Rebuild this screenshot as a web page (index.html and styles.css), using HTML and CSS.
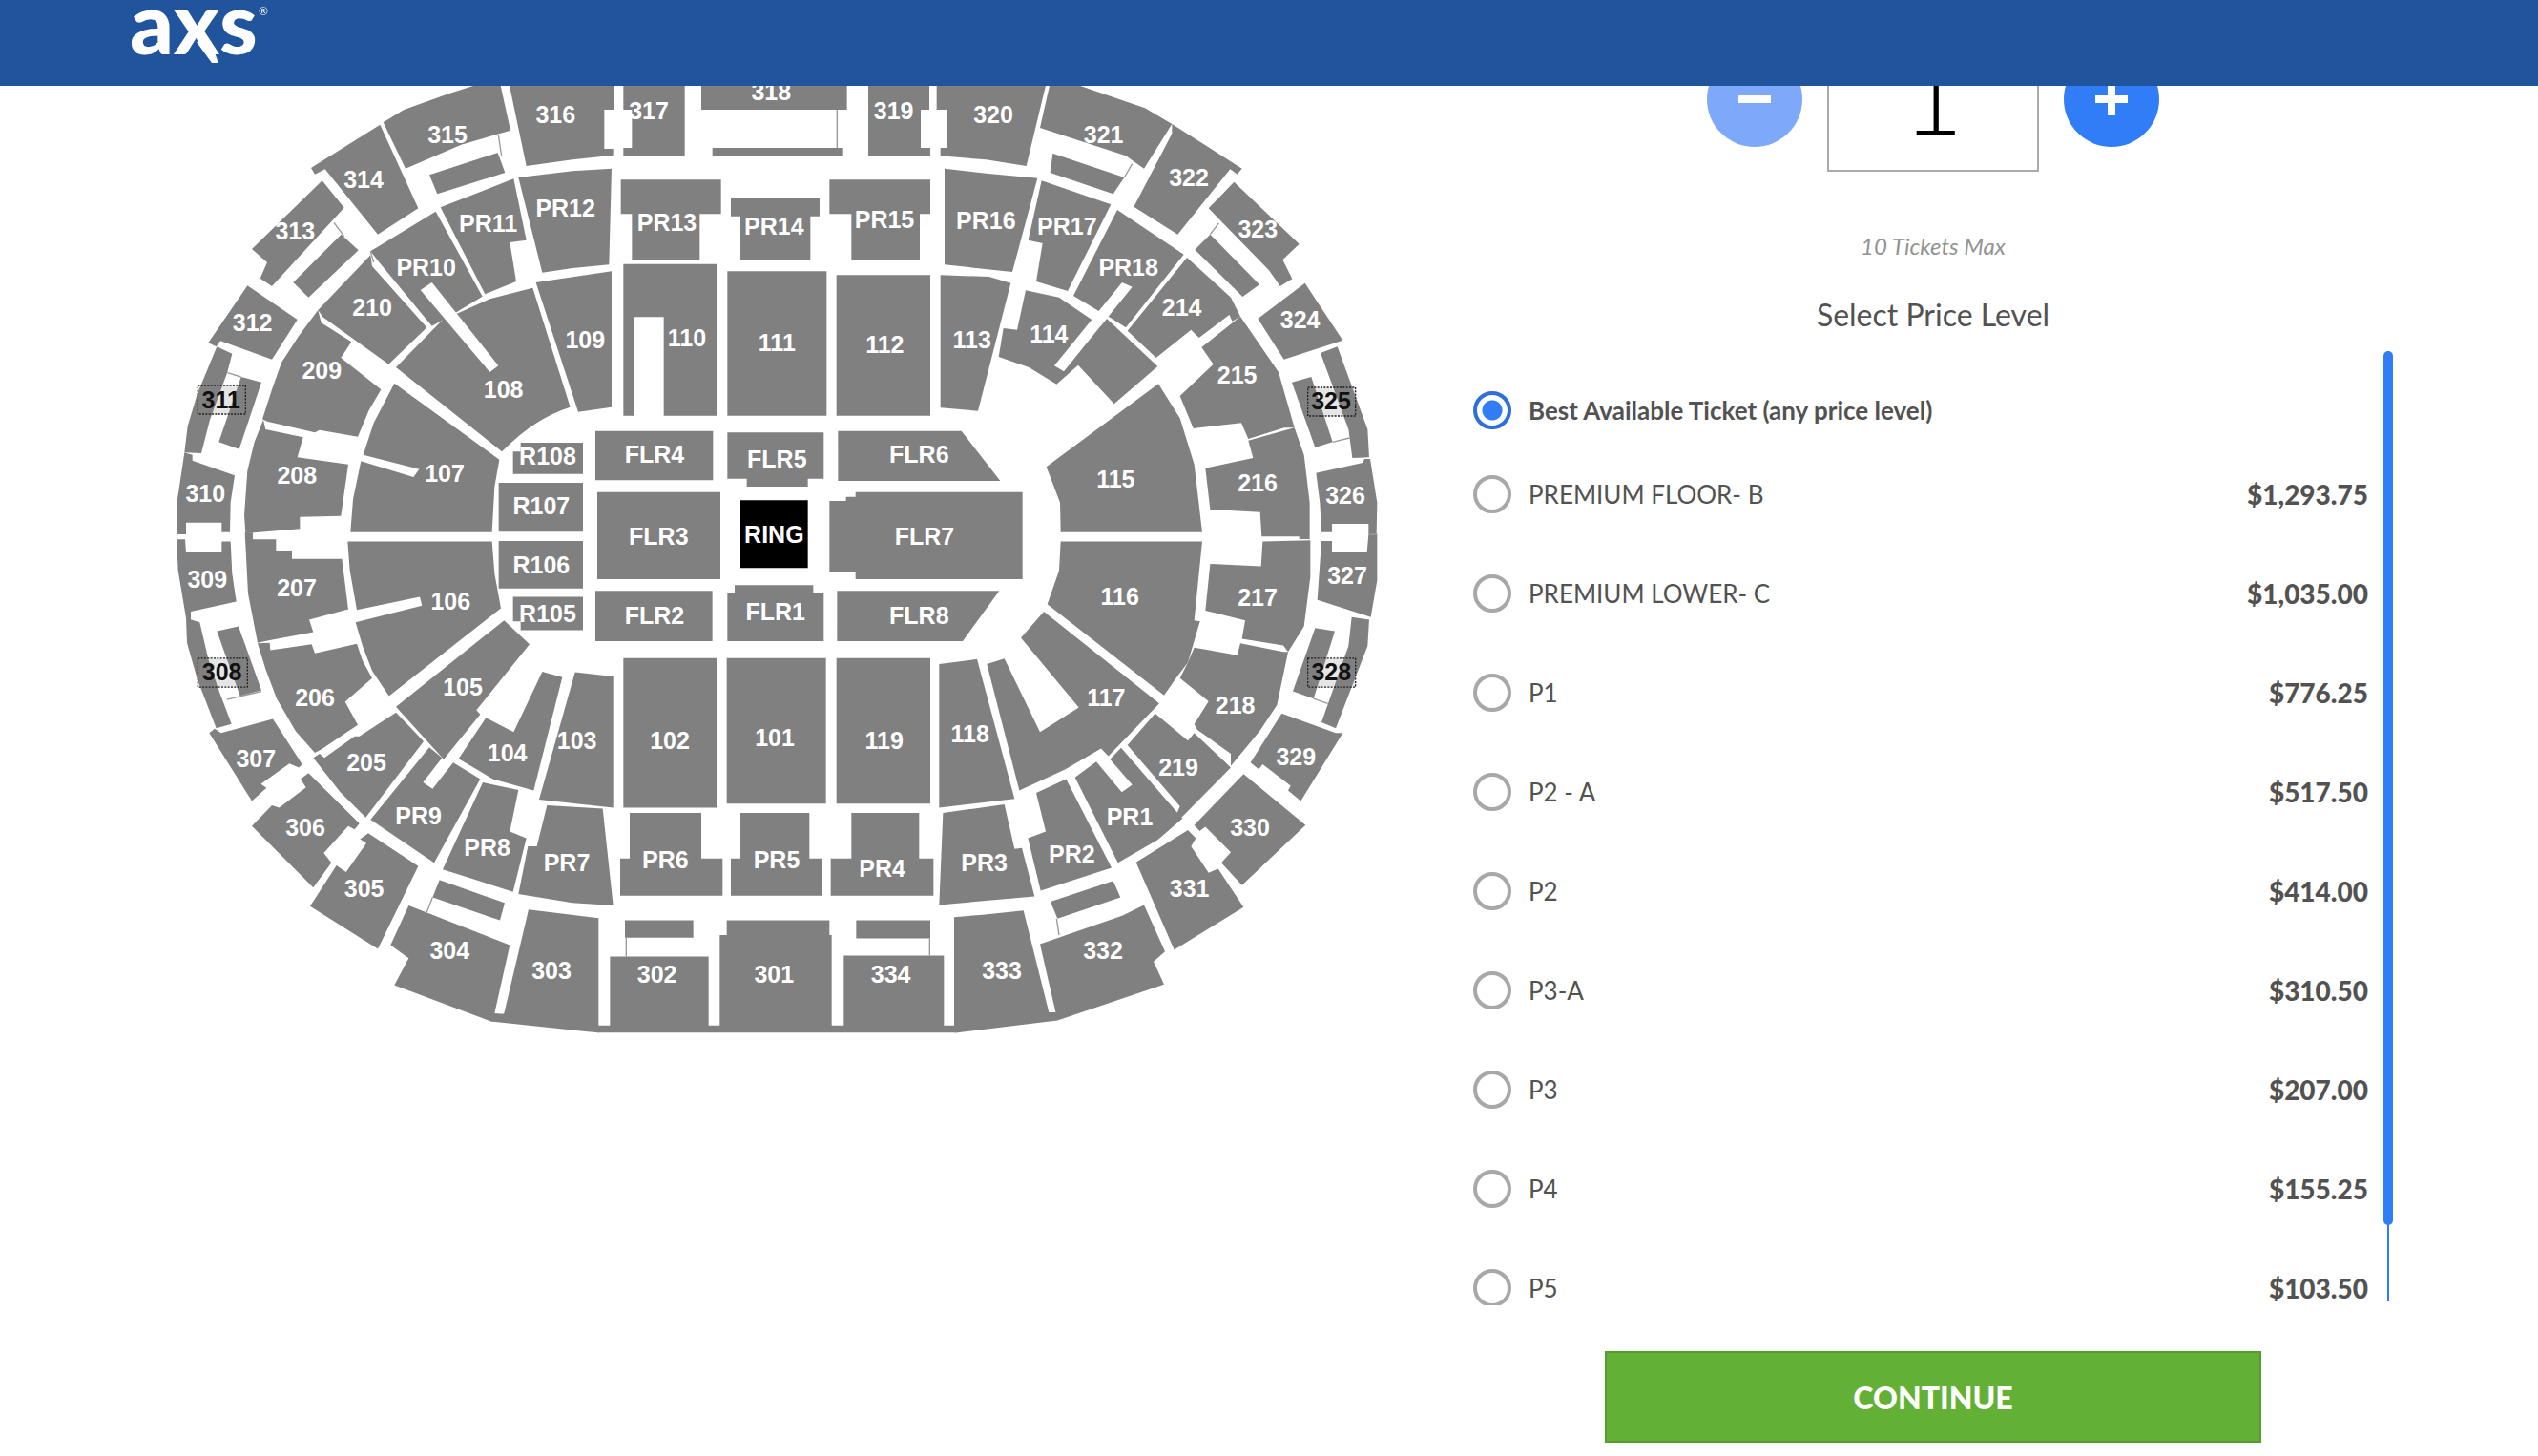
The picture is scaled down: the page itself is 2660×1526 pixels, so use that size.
FILE: index.html
```
<!DOCTYPE html>
<html lang="en">
  <head>
    <meta charset="UTF-8">
    <meta name="viewport" content="width=device-width, initial-scale=1.0">
    <title>AXS - Select Tickets</title>
    <link rel="stylesheet" href="styles.css">
  </head>
  <body>
    <header class="header">
      <a class="logo" href="#" aria-label="AXS home">
        <svg width="150" height="80" viewBox="0 0 150 80">
          <text class="logo-letters" x="0" y="57">axs</text>
          <path d="M70 44L84 42 93 66 86 66Z"/>
          <text class="logo-mark" x="135" y="16">®</text>
        </svg>
      </a>
    </header>

    <main class="content">
      <svg class="seat-map" viewBox="0 0 3870 3060" role="img" aria-label="Venue seating map">
        <!-- upper left -->
        <g>
          <path d="M1090 20L1420 20 1420 105 1390 105 1390 228 1418 228 1418 248 1290 262 1145 282Z"/>
          <path d="M695 145L760 105 900 55 985 28 1062 20 1095 170 940 215 765 290Z"/>
          <path d="M840 310L1055 240 1078 303 865 370Z"/>
          <path d="M685 152L805 415 678 497 512 292 480 308 468 288Z"/>
          <path d="M503 328L572 413 345 660 308 635 330 585 282 543Z"/>
          <path d="M563 497L617 547 460 695 412 648Z"/>
          <path d="M268 658L425 765 345 890 183 832 170 850 145 838Z"/>
          <path d="M172 850L220 872 205 930 150 1080 123 1185 70 1183 80 1100 110 1000Z"/>
          <path d="M248 945L312 962 242 1172 178 1150Z"/>
          <path d="M70 1183L95 1190 95 1208 228 1255 215 1340 213 1433 187 1433 187 1403 75 1403 75 1440 45 1440 48 1330Z"/>
          <path d="M875 412L1105 322 1145 515 1093 522 1113 645 1015 685Z"/>
          <path d="M1120 318L1290 298 1413 290 1405 592 1290 603 1195 617Z"/>
          <path d="M655 550L860 425 1007 692 920 745 848 785 680 582Z"/>
          <path d="M735 915L885 762 930 745 1030 700 1165 665 1283 1040Q1170 1075 1068 1180Z"/>
          <path class="aisle" d="M848 648L1057 910 1030 930 812 672Z"/>
          <path d="M490 735L655 562 660 597 832 790 712 905 505 757Z"/>
          <path d="M490 735L500 775 595 835 562 885 688 985 650 1050 615 1133 495 1112 480 1120 330 1085 315 1078 345 985 375 900 430 815Z"/>
          <path d="M318 1080L325 1110 443 1135 425 1198 585 1220 562 1382 433 1385 433 1423 262 1437 258 1380 268 1240 290 1150Z"/>
          <path d="M730 965L1060 1205 1045 1290 1037 1433 592 1433 600 1330 625 1210 790 1260 808 1235 632 1190 665 1090Z"/>
          <path d="M1175 648L1413 613 1413 1040 1308 1055Z"/>
          <path d="M1103 1180L1127 1180 1127 1152 1323 1152 1323 1250 1103 1250Z"/>
          <path d="M1058 1278H1323V1432H1058Z"/>
          <path class="edge" d="M1057 185L1067 250M540 460L572 503M205 932L248 945M655 550L665 585"/>
          <text x="1237" y="148">316</text>
          <text x="897" y="210">315</text>
          <text x="633" y="350">314</text>
          <text x="418" y="512">313</text>
          <text x="284" y="800">312</text>
          <text x="136" y="1338">310</text>
          <text x="1268" y="442">PR12</text>
          <text x="1025" y="490">PR11</text>
          <text x="830" y="627">PR10</text>
          <text x="660" y="754">210</text>
          <text x="502" y="952">209</text>
          <text x="424" y="1280">208</text>
          <text x="1330" y="856">109</text>
          <text x="1073" y="1010">108</text>
          <text x="888" y="1274">107</text>
          <text x="1212" y="1222">R108</text>
          <text x="1192" y="1378">R107</text>
          <rect class="marked" x="112" y="972" width="150" height="90"/>
          <text class="marked-label" x="185" y="1044">311</text>
        </g>

        <!-- upper centre -->
        <g transform="translate(1290 0)">
          <path d="M160 20L353 20 353 250 160 250 160 225 187 225 187 105 160 105Z"/>
          <path d="M405 20H863V105H405Z"/>
          <path d="M440 225H848V250H440Z"/>
          <path d="M930 20L1122 20 1122 105 1095 105 1095 225 1125 225 1125 250 930 250Z"/>
          <path d="M1145 20L1490 20 1427 282 1300 262 1157 250 1157 225 1178 225 1178 105 1145 105Z"/>
          <path d="M152 325L467 325 467 433 400 433 400 577 187 577 187 433 152 433Z"/>
          <path d="M498 382L777 382 777 440 748 440 748 577 528 577 528 440 498 440Z"/>
          <path d="M808 325L1125 325 1125 433 1092 433 1092 577 877 577 877 433 808 433Z"/>
          <path d="M1170 290L1300 305 1462 320 1383 615 1170 592Z"/>
          <path d="M160 590L453 590 453 1067 287 1067 287 757 193 757 193 1067 160 1067Z"/>
          <path d="M487 613H799V1067H487Z"/>
          <path d="M830 625H1125V1067H830Z"/>
          <path d="M1157 625L1310 630 1378 650 1275 1052 1157 1042Z"/>
          <path d="M72 1115H442V1270H72Z"/>
          <path d="M487 1120L790 1120 790 1265 740 1265 740 1290 548 1290 548 1265 487 1265Z"/>
          <path d="M835 1115L1223 1115 1345 1272 835 1272Z"/>
          <path d="M78 1307H465V1581H78Z"/>
          <path d="M808 1335L860 1335 860 1322 890 1322 890 1307 1415 1307 1415 1581 890 1581 890 1557 808 1557Z"/>
          <path class="ring" d="M528 1333H740V1546H528Z"/>
          <path class="edge" d="M832 105V225"/>
          <text x="240" y="134">317</text>
          <text x="625" y="74">318</text>
          <text x="1010" y="134">319</text>
          <text x="1323" y="148">320</text>
          <text x="297" y="486">PR13</text>
          <text x="634" y="498">PR14</text>
          <text x="981" y="478">PR15</text>
          <text x="1300" y="480">PR16</text>
          <text x="360" y="850">110</text>
          <text x="643" y="864">111</text>
          <text x="982" y="870">112</text>
          <text x="1256" y="856">113</text>
          <text x="258" y="1216">FLR4</text>
          <text x="643" y="1230">FLR5</text>
          <text x="1090" y="1216">FLR6</text>
          <text x="271" y="1472">FLR3</text>
          <text x="1107" y="1472">FLR7</text>
          <text x="634" y="1466">RING</text>
        </g>

        <!-- upper right -->
        <g transform="translate(2490 0)">
          <path d="M302 20L390 28 600 100 685 150 597 290 540 250 270 162Z"/>
          <path d="M310 242L535 318 500 370 302 303Z"/>
          <path d="M685 150L905 290 890 308 868 292 703 497 565 410 685 180Z"/>
          <path d="M880 332L1085 527 1033 577 1063 637 1025 660 990 610 800 415Z"/>
          <path d="M805 497L960 655 907 693 757 545Z"/>
          <path d="M1103 650L1222 830 1037 890 955 762Z"/>
          <path d="M1152 870L1205 850 1300 1110 1305 1198 1252 1200 1240 1110Z"/>
          <path d="M1062 962L1123 945 1190 1150 1135 1167Z"/>
          <path d="M1138 1247L1285 1215 1290 1203 1308 1203 1330 1340 1328 1440 1303 1440 1303 1407 1188 1407 1188 1433 1155 1433 1150 1340Z"/>
          <path d="M275 328L493 403 357 675 258 645 278 525 233 515Z"/>
          <path d="M513 420L722 560 540 790 485 755 455 738 375 690Z"/>
          <path d="M225 673L330 695 437 768 480 762 640 912 503 1030 390 908 322 968 235 915 140 882 155 792 198 797Z"/>
          <path class="aisle" d="M528 648L560 662 345 928 315 910Z"/>
          <path class="aisle" d="M437 768L455 738 485 755 480 762 460 785Z"/>
          <path d="M732 570L870 695 900 755 875 770 865 750 770 822 745 797 635 885 545 800Z"/>
          <path d="M900 755L1020 930 1070 1105 1038 1105 925 1140 903 1090 752 1107 710 1005 815 905 778 852Z"/>
          <path d="M1070 1105L1100 1190 1118 1340 1118 1455 1085 1455 1085 1447 967 1447 962 1370 805 1362 790 1232 940 1200 925 1145Z"/>
          <path d="M642 967L710 1075 755 1220 780 1433 335 1433 333 1340 290 1228Z"/>
          <path class="edge" d="M535 318L560 275M805 497L832 462M1190 1150L1243 1137"/>
          <text x="470" y="210">321</text>
          <text x="738" y="344">322</text>
          <text x="955" y="506">323</text>
          <text x="1088" y="792">324</text>
          <text x="1230" y="1344">326</text>
          <text x="355" y="498">PR17</text>
          <text x="548" y="626">PR18</text>
          <text x="716" y="754">214</text>
          <text x="890" y="966">215</text>
          <text x="954" y="1306">216</text>
          <text x="298" y="838">114</text>
          <text x="508" y="1294">115</text>
          <rect class="marked" x="1112" y="978" width="150" height="90"/>
          <text class="marked-label" x="1185" y="1048">325</text>
        </g>

        <!-- lower left -->
        <g transform="translate(0 1440) scale(1 1.033)">
          <path d="M45 15L72 15 75 55 187 55 187 22 215 22 220 120 233 205 90 235 90 265 75 255 50 110Z"/>
          <path d="M75 255L118 268 145 380 180 480 218 577 170 590 110 440 78 330Z"/>
          <path d="M172 295L240 280 312 475 245 492Z"/>
          <path d="M260 -5L285 -5 285 15 358 15 358 50 408 50 408 75 565 75 585 228 462 260 475 298 338 322 300 330 270 180Z"/>
          <path d="M300 332L338 330 340 353 470 335 480 362 612 333 630 385 660 438 575 510 615 580 500 655 480 665 420 600 360 500 325 410Z"/>
          <path d="M583 22L1037 22 1045 120 1065 225 713 492 660 415 630 340 608 268 817 217 810 190 612 230 590 110Z"/>
          <path d="M1075 262L1155 335 988 535 1000 548 885 685 735 525Z"/>
          <path d="M1195 418L1258 435 1168 780 1040 745 932 683 1018 558 1105 602Z"/>
          <path d="M1298 420L1418 433 1418 832 1185 807Z"/>
          <path d="M735 542L822 630 640 862 560 785 475 680 495 668 510 680 605 615 620 615Z"/>
          <path d="M840 648L880 680 820 755 850 775 915 695 1000 745 855 1000 655 868Z"/>
          <path d="M1008 755L1120 778 1093 905 1145 925 1103 1088 882 1020Z"/>
          <path d="M1210 825L1385 835 1418 1130 1290 1122 1120 1095 1150 950 1178 950Z"/>
          <path d="M348 562L440 700 430 710 400 698 310 760 328 772 282 812 148 605 165 592 185 605Z"/>
          <path d="M460 727L620 880 605 898 585 888 508 970 532 1000 475 1075 282 888 345 825 368 832 452 770 435 745Z"/>
          <path d="M648 910L805 1010 678 1262 465 1132 548 1008 578 1028 642 940 622 928Z"/>
          <path d="M775 1130L1093 1250 1045 1458 1075 1460 1072 1483 1035 1483 730 1372 775 1290 718 1250Z"/>
          <path d="M872 1052L1077 1122 1062 1175 850 1105Z"/>
          <path d="M1152 1142L1372 1168 1372 1517 1330 1513 1040 1483 1075 1458Z"/>
          <path d="M1058 20H1323V165H1058Z"/>
          <path d="M1103 190L1323 190 1323 292 1127 292 1127 265 1103 265Z"/>
          <path class="edge" d="M203 503L312 478M850 1105L832 1150"/>
          <rect class="marked" x="112" y="377" width="156" height="88"/>
        </g>
        <g transform="translate(0 1440)">
          <text x="142" y="167">309</text>
          <text x="295" y="731">307</text>
          <text x="450" y="948">306</text>
          <text x="635" y="1140">305</text>
          <text x="904" y="1334">304</text>
          <text x="1224" y="1398">303</text>
          <text x="423" y="194">207</text>
          <text x="480" y="539">206</text>
          <text x="642" y="744">205</text>
          <text x="806" y="911">PR9</text>
          <text x="1022" y="1012">PR8</text>
          <text x="1272" y="1058">PR7</text>
          <text x="907" y="238">106</text>
          <text x="945" y="508">105</text>
          <text x="1085" y="713">104</text>
          <text x="1304" y="674">103</text>
          <text x="1192" y="124">R106</text>
          <text x="1212" y="277">R105</text>
          <text class="marked-label" x="188" y="459">308</text>
        </g>

        <!-- lower centre -->
        <g transform="translate(1290 1440) scale(1 1.033)">
          <path d="M72 172H440V325H72Z"/>
          <path d="M510 155L757 155 757 178 790 178 790 325 487 325 487 178 510 178Z"/>
          <path d="M832 172L1342 172 1227 325 832 325Z"/>
          <path d="M160 377H453V832H160Z"/>
          <path d="M485 377H797V820H485Z"/>
          <path d="M830 377H1125V820H830Z"/>
          <path d="M1153 395L1272 380 1390 805 1153 832Z"/>
          <path d="M180 848L405 848 405 987 472 987 472 1100 150 1100 150 987 180 987Z"/>
          <path d="M528 848L745 848 745 987 783 987 783 1100 498 1100 498 987 528 987Z"/>
          <path d="M877 848L1090 848 1090 987 1135 987 1135 1100 812 1100 812 987 877 987Z"/>
          <path d="M1165 848L1358 822 1390 958 1413 955 1453 1102 1153 1128Z"/>
          <path d="M165 1175H380V1228H165Z"/>
          <path d="M118 1285H428V1515H118Z"/>
          <path d="M485 1175L808 1175 808 1220 815 1220 815 1515 463 1515 463 1220 485 1220Z"/>
          <path d="M892 1175H1125V1230H892Z"/>
          <path d="M853 1282H1168V1515H853Z"/>
          <path d="M78 1495H1210V1517H78Z"/>
          <path d="M1200 1165L1290 1158 1418 1145 1498 1455 1525 1455 1525 1480 1210 1517 1200 1517Z"/>
          <path class="edge" d="M169 1228V1285M1123 1230V1282"/>
        </g>
        <g transform="translate(1290 1440)">
          <text x="258" y="283">FLR2</text>
          <text x="638" y="271">FLR1</text>
          <text x="1090" y="283">FLR8</text>
          <text x="306" y="674">102</text>
          <text x="636" y="667">101</text>
          <text x="980" y="674">119</text>
          <text x="1250" y="655">118</text>
          <text x="292" y="1051">PR6</text>
          <text x="642" y="1051">PR5</text>
          <text x="974" y="1078">PR4</text>
          <text x="1295" y="1058">PR3</text>
          <text x="266" y="1411">302</text>
          <text x="634" y="1411">301</text>
          <text x="1001" y="1411">334</text>
          <text x="1350" y="1398">333</text>
        </g>

        <!-- lower right -->
        <g transform="translate(2490 1440) scale(1 1.033)">
          <path d="M335 22L780 22 755 262 773 265 735 390 700 435 660 490 293 213 330 110Z"/>
          <path d="M970 22L1120 18 1120 130 1100 280 1050 358 1035 338 905 318 915 262 790 232 805 90 965 97Z"/>
          <path d="M755 345L890 368 900 332 1035 358 1050 358 1015 520 960 600 870 705 870 668 765 595 755 578 800 508 710 438 735 390Z"/>
          <path d="M282 235L645 515 485 675 462 652 350 715 205 780 103 395 158 378 270 602 392 527 210 315Z"/>
          <path d="M632 545L735 628 755 605 870 710 715 862 700 850 710 828 545 642Z"/>
          <path d="M525 650L700 845 718 865 640 930 515 1000 380 740 447 692 527 785 560 762 490 685Z"/>
          <path d="M258 787L352 745 495 1015 272 1085 232 925 288 905Z"/>
          <path d="M1155 20L1188 20 1188 55 1298 55 1303 0 1330 0 1330 140 1310 252 1142 200Z"/>
          <path d="M1135 285L1197 295 1130 500 1065 478Z"/>
          <path d="M1250 252L1305 260 1300 340 1200 590 1155 572 1240 340Z"/>
          <path d="M1030 545L1200 605 1222 605 1090 812 1050 780 1058 765 970 700 958 715 932 695Z"/>
          <path d="M910 730L1105 885 905 1068 840 1000 870 968 790 890 772 903 755 885Z"/>
          <path d="M735 900L760 925 745 950 800 1030 830 1018 910 1135 692 1265 572 998Z"/>
          <path d="M597 1128L663 1270 627 1300 660 1370 325 1480 270 1247 530 1160Z"/>
          <path d="M303 1118L500 1055 523 1105 325 1170Z"/>
          <path class="edge" d="M1130 500L1175 515M322 1170L330 1220M1303 0H1330"/>
          <rect class="marked" x="1112" y="377" width="150" height="88"/>
        </g>
        <g transform="translate(2490 1440)">
          <text x="1236" y="155">327</text>
          <text x="1075" y="725">329</text>
          <text x="930" y="948">330</text>
          <text x="740" y="1140">331</text>
          <text x="468" y="1334">332</text>
          <text x="954" y="225">217</text>
          <text x="884" y="564">218</text>
          <text x="705" y="758">219</text>
          <text x="552" y="915">PR1</text>
          <text x="370" y="1033">PR2</text>
          <text x="521" y="223">116</text>
          <text x="478" y="539">117</text>
          <text class="marked-label" x="1186" y="459">328</text>
        </g>
      </svg>

      <form class="panel">
        <div class="quantity">
          <button class="round-button" type="button" aria-label="Remove ticket" disabled>
            <svg width="34" height="34" viewBox="0 0 34 34"><path d="M0 13H34V21H0Z"/></svg>
          </button>
          <input class="quantity-input" type="text" inputmode="numeric" value="1" aria-label="Number of tickets">
          <button class="round-button" type="button" aria-label="Add ticket">
            <svg width="34" height="34" viewBox="0 0 34 34"><path d="M0 13H13V0H21V13H34V21H21V34H13V21H0Z"/></svg>
          </button>
        </div>
        <p class="max-note">10 Tickets Max</p>
        <h2 class="panel-title" id="levelTitle">Select Price Level</h2>

        <div class="levels">
          <div class="level-list" role="radiogroup" aria-labelledby="levelTitle">
            <label class="level level-best"><input type="radio" name="level" checked><span>Best Available Ticket (any price level)</span></label>
            <label class="level"><input type="radio" name="level"><span>PREMIUM FLOOR- B</span><span class="price">$1,293.75</span></label>
            <label class="level"><input type="radio" name="level"><span>PREMIUM LOWER- C</span><span class="price">$1,035.00</span></label>
            <label class="level"><input type="radio" name="level"><span>P1</span><span class="price">$776.25</span></label>
            <label class="level"><input type="radio" name="level"><span>P2 - A</span><span class="price">$517.50</span></label>
            <label class="level"><input type="radio" name="level"><span>P2</span><span class="price">$414.00</span></label>
            <label class="level"><input type="radio" name="level"><span>P3-A</span><span class="price">$310.50</span></label>
            <label class="level"><input type="radio" name="level"><span>P3</span><span class="price">$207.00</span></label>
            <label class="level"><input type="radio" name="level"><span>P4</span><span class="price">$155.25</span></label>
            <label class="level"><input type="radio" name="level"><span>P5</span><span class="price">$103.50</span></label>
          </div>
          <div class="scroll-track"><div class="scroll-thumb"></div></div>
        </div>

        <button class="continue" type="submit">CONTINUE</button>
      </form>
    </main>
  </body>
</html>
```
FILE: styles.css
```
* {
  box-sizing: border-box;
}
body {
  margin: 0;
  background: #fff;
  color: #525252;
  font-family: Lato, 'Open Sans', sans-serif;
  font-size: 26px;
}

.header {
  position: fixed;
  top: 0;
  left: 0;
  right: 0;
  z-index: 2;
  height: 90px;
  padding-left: 136px;
  background: #20549c;
}
.logo {
  display: inline-block;
}
.logo svg {
  display: block;
  overflow: visible;
  fill: #fff;
}
.logo-letters {
  font-size: 90px;
  font-weight: 900;
}
.logo-mark {
  font-size: 12px;
}

.content {
  display: grid;
  grid-template-columns: 1290fr 964fr;
  column-gap: 84px;
  height: 100vh;
  padding: 28px 152px 14px 170px;
}

/* seating map */
.seat-map {
  width: 100%;
  margin-top: 52px;
  fill: #808080;
}
.seat-map text {
  fill: #fff;
  font-family: 'Liberation Sans', Arial, sans-serif;
  font-size: 75px;
  font-weight: bold;
  text-anchor: middle;
}
.seat-map .aisle {
  fill: #fff;
}
.seat-map .ring {
  fill: #000;
}
.seat-map .edge {
  fill: none;
  stroke: #999;
  stroke-width: 4;
}
.seat-map .marked {
  fill: rgba(128, 128, 128, 0.2);
  stroke: #222;
  stroke-width: 4;
  stroke-dasharray: 6 4;
}
.seat-map .marked-label {
  fill: #111;
}

/* ticket panel */
.panel {
  display: flex;
  flex-direction: column;
  align-items: center;
  min-height: 0;
}
.quantity {
  display: flex;
  align-items: center;
  gap: 26px;
}
.round-button {
  display: flex;
  align-items: center;
  justify-content: center;
  width: 100px;
  height: 100px;
  padding: 0;
  border: 0;
  border-radius: 50%;
  background: #317cf7;
}
.round-button:disabled {
  background: #7ea9fa;
}
.round-button svg {
  fill: #fff;
}
.quantity-input {
  width: 222px;
  height: 152px;
  padding: 0 0 12px;
  border: 2px solid #aaa;
  background: #fff;
  color: #000;
  font-family: inherit;
  font-size: 110px;
  font-weight: 300;
  text-align: center;
}
.max-note {
  margin: 62px 0 0;
  color: #939393;
  font-size: 24px;
  font-style: italic;
  line-height: 32px;
}
.panel-title {
  margin: 36px 0 18px;
  font-size: 32px;
  font-weight: 400;
  line-height: 40px;
}

.levels {
  display: flex;
  flex: 1;
  gap: 16px;
  width: 100%;
  min-height: 0;
}
.level-list {
  flex: 1;
  padding-top: 26px;
  overflow: hidden;
}
.level {
  display: flex;
  align-items: center;
  gap: 18px;
  height: 104px;
}
.level-best {
  height: 72px;
  font-weight: 700;
}
.level input {
  flex: none;
  width: 40px;
  height: 40px;
  margin: 0;
  border: 4px solid #a8a8a8;
  border-radius: 50%;
  appearance: none;
}
.level input:checked {
  border-color: #2f6fdc;
  background: radial-gradient(#317cf7 0 10px, #fff 11px);
}
.price {
  margin-left: auto;
  font-size: 28px;
  font-weight: 900;
}
.scroll-track {
  width: 10px;
  margin-bottom: 4px;
  background: linear-gradient(#317cf7, #317cf7) center / 2px 100% no-repeat;
}
.scroll-thumb {
  height: 92%;
  border-radius: 5px;
  background: #317cf7;
}

.continue {
  width: 688px;
  max-width: 100%;
  height: 96px;
  margin-top: 48px;
  border: 2px solid #559c2e;
  background: #62b035;
  color: #fff;
  font-family: inherit;
  font-size: 32px;
  font-weight: 900;
}
```
